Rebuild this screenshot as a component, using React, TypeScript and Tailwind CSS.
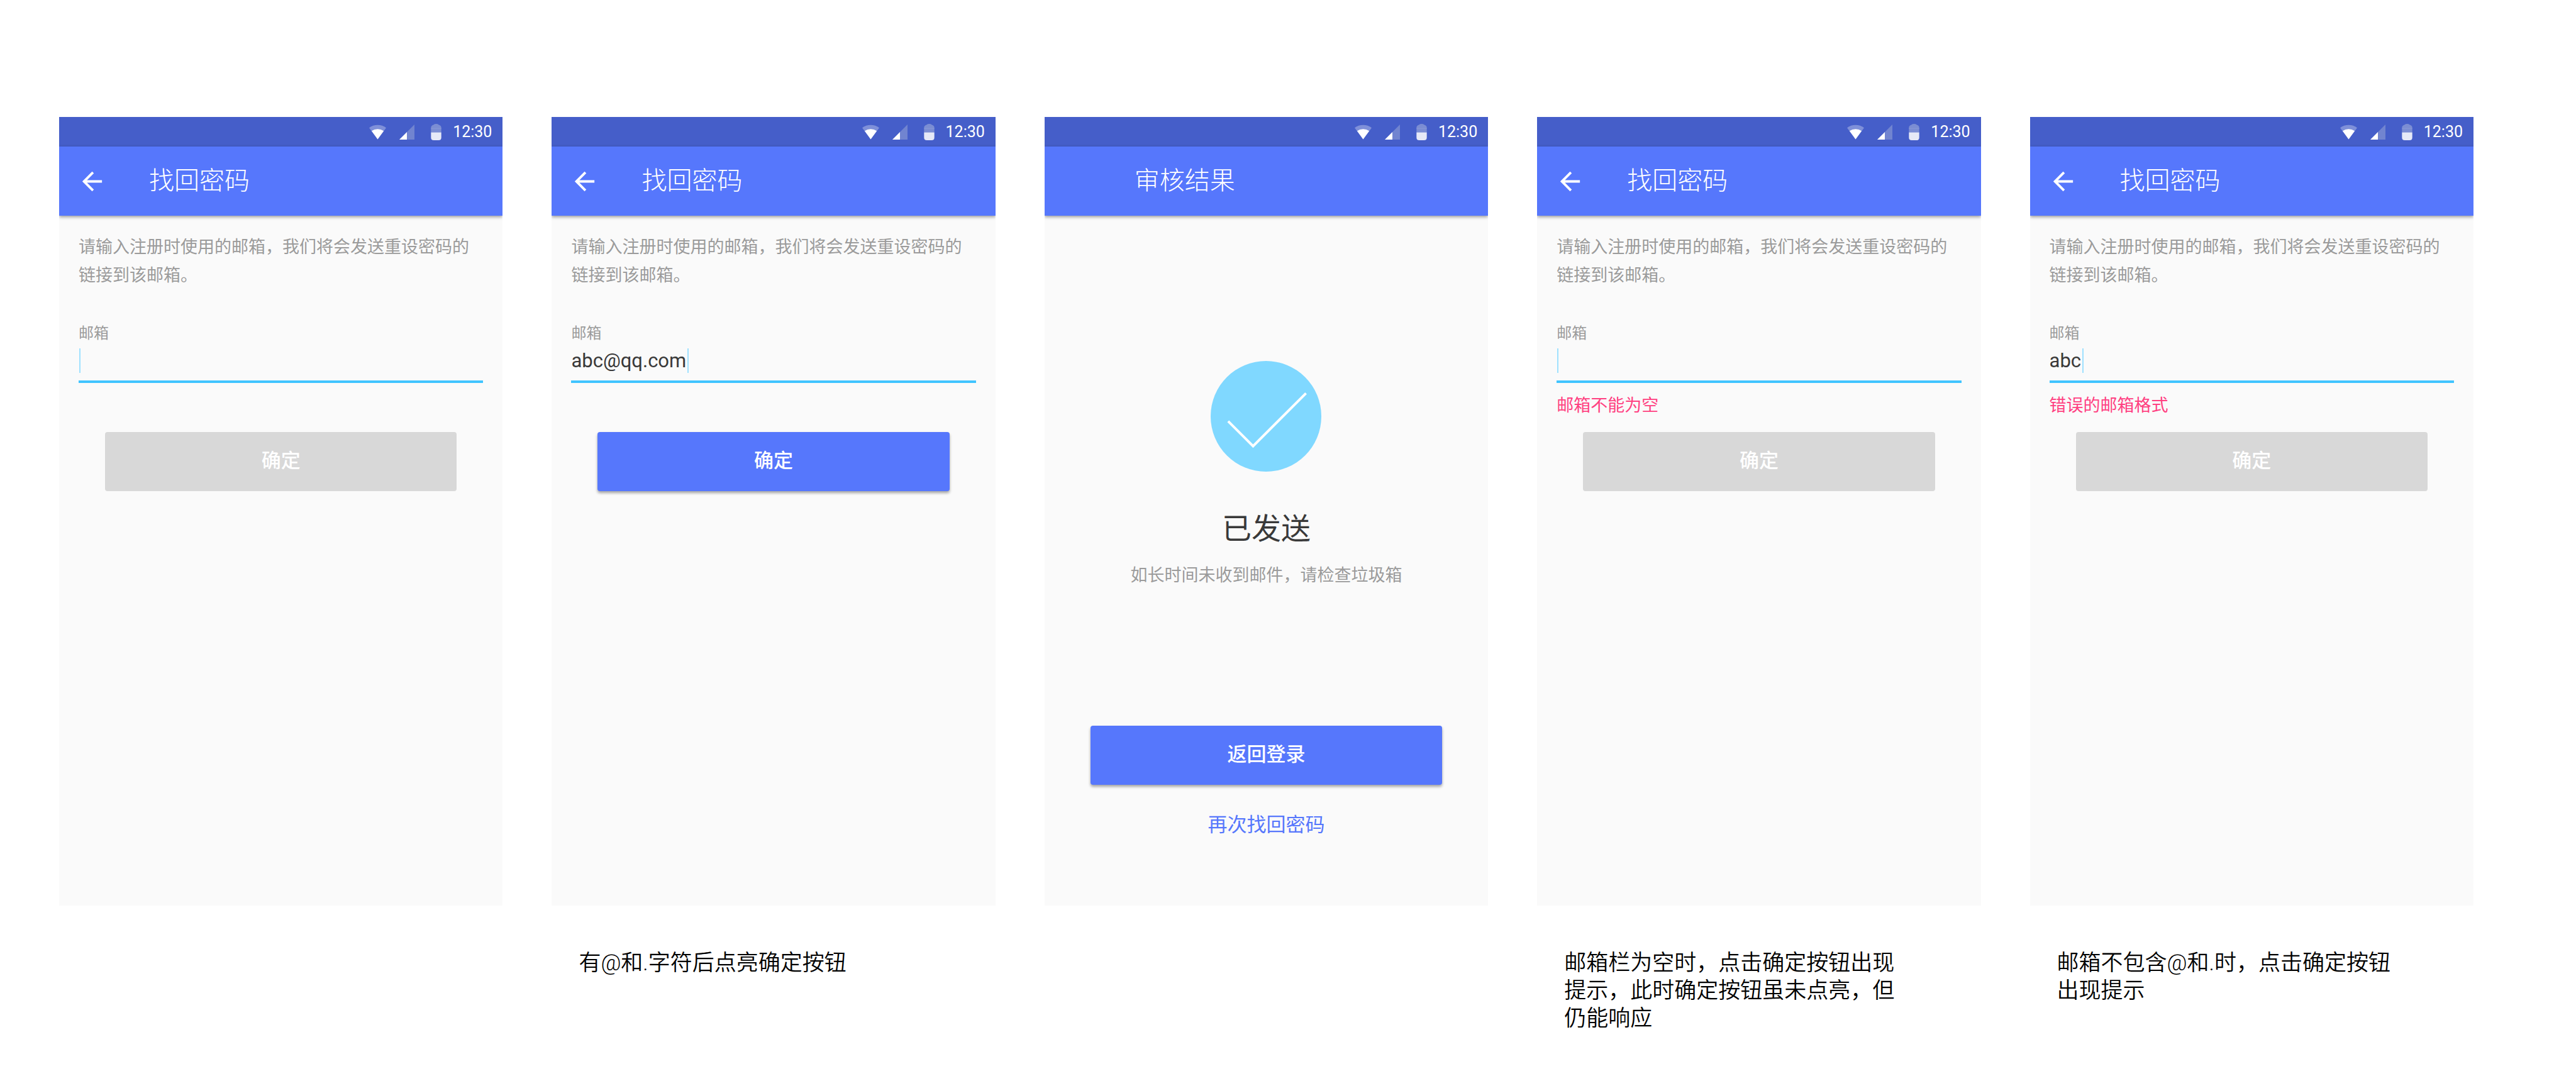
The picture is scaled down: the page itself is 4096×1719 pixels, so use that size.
import { useId, useState, type ReactNode } from "react";

function WifiIcon() {
  return (
    <svg viewBox="0 0 28 24" className="h-6 w-[27px]" aria-hidden="true">
      <path d="M14 24 L0 5 A23.6 23.6 0 0 1 28 5 Z" fill="#7f90d9" />
      <path d="M14 24 L4 10.2 A17 17 0 0 1 24 10.2 Z" fill="#fff" />
    </svg>
  );
}

function SignalIcon() {
  return (
    <svg viewBox="0 0 24 24" className="size-6" aria-hidden="true">
      <path d="M0 24 H24 V0 Z" fill="#7184d0" />
      <path d="M0 24 H12 V12 Z" fill="#fff" />
    </svg>
  );
}

function BatteryIcon() {
  return (
    <svg viewBox="0 0 17 27" className="h-[26px] w-[17px]" aria-hidden="true">
      <path d="M0 14 V6.5 Q0 2.5 4 1.5 Q6 0 8.500 0 Q11 0 13 1.500 Q17 2.500 17 6.500 V14 Z" fill="#7b8dd3" />
      <path d="M0 7 H17 V8 H0 Z" fill="#8b9ad8" />
      <path d="M0 14 H17 V22.500 Q17 27 12.500 27 H4.500 Q0 27 0 22.500 Z" fill="#e6e9f7" />
    </svg>
  );
}

function BackIcon() {
  return (
    <svg viewBox="0 0 24 24" className="size-[47px]" fill="currentColor" aria-hidden="true">
      <path d="M20 11H7.830l5.590-5.590L12 4l-8 8 8 8 1.410-1.410L7.830 13H20v-2z" />
    </svg>
  );
}

function SuccessIcon() {
  return (
    <svg viewBox="0 0 180 180" className="size-44" aria-hidden="true">
      <circle cx="90" cy="90" r="90" fill="#80d8ff" />
      <path d="M28.500 98 L69 138.500 L155 52.500" fill="none" stroke="#fff" strokeWidth="4" />
    </svg>
  );
}

function Phone({ title, back, children }: { title: string; back?: boolean; children: ReactNode }) {
  return (
    <section className="flex aspect-[9/16] flex-col overflow-hidden bg-[#fafafa]">
      <div className="flex h-[47px] shrink-0 items-center justify-end bg-[#455ec9] pr-[17px] text-white">
        <WifiIcon />
        <span className="w-[21px]" />
        <SignalIcon />
        <span className="w-[26px]" />
        <BatteryIcon />
        <time className="ml-[18px] text-[25px] leading-8">12:30</time>
      </div>
      <header className="flex h-[110px] shrink-0 items-center bg-[#5677fc] pl-[29px] text-white shadow-[0_2px_5px_rgba(0,0,0,0.4)]">
        <div className="w-[114px] shrink-0">
          {back && (
            <button type="button" aria-label="返回" className="block">
              <BackIcon />
            </button>
          )}
        </div>
        <h1 className="text-[40px] leading-[56px] font-light">{title}</h1>
      </header>
      {children}
    </section>
  );
}

function PrimaryButton({ active, children }: { active: boolean; children: ReactNode }) {
  return (
    <button
      type="button"
      className={
        active
          ? "mx-[73px] h-[94px] shrink-0 rounded bg-[#5677fc] pb-1 text-[31px] leading-[45px] font-medium text-white shadow-[0_3px_4px_rgba(0,0,0,0.35)]"
          : "mx-[73px] h-[94px] shrink-0 rounded bg-[#d8d8d8] pb-1 text-[31px] leading-[45px] font-medium text-white"
      }
    >
      {children}
    </button>
  );
}

function RecoverForm({ initial, error }: { initial: string; error?: string }) {
  const id = useId();
  const [email, setEmail] = useState(initial);
  const active = email.includes("@") && email.includes(".");
  return (
    <form className="flex flex-col pt-7" onSubmit={(e) => e.preventDefault()}>
      <p className="mx-[31px] text-[27px] leading-[45px] text-[#9b9b9b]">
        请输入注册时使用的邮箱，我们将会发送重设密码的链接到该邮箱。
      </p>
      <label htmlFor={id} className="mx-[31px] mt-[53px] text-[24px] leading-8 text-[#9b9b9b]">
        邮箱
      </label>
      <div className="mx-[31px] mt-2 flex border-b-4 border-[#40c4ff] pb-3">
        <input
          id={id}
          type="text"
          value={email}
          onChange={(e) => setEmail(e.target.value)}
          className="field-sizing-content h-[39px] p-0 text-[31px] leading-[39px] text-[#393939] caret-transparent outline-none"
        />
        <span className={email ? "ml-0.5 h-[39px] w-0.5 bg-[#9fe1ff]" : "h-[39px] w-0.5 bg-[#9fe1ff]"} />
      </div>
      <p className="mx-[31px] mt-4 mb-[22px] min-h-10 text-[27px] leading-10 text-[#ff4081]">{error}</p>
      <PrimaryButton active={active}>确定</PrimaryButton>
    </form>
  );
}

function Result() {
  return (
    <div className="flex flex-col pt-[231px] text-center">
      <div className="flex justify-center">
        <SuccessIcon />
      </div>
      <h2 className="mt-[61px] text-[47px] leading-[60px] text-[#393939]">已发送</h2>
      <p className="mt-[22px] text-[27px] leading-[45px] text-[#9b9b9b]">如长时间未收到邮件，请检查垃圾箱</p>
      <div className="mt-[216px] flex flex-col">
        <PrimaryButton active>返回登录</PrimaryButton>
      </div>
      <a href="#recover" className="mt-[41px] self-center text-[31px] leading-[45px] text-[#5677fc]">
        再次找回密码
      </a>
    </div>
  );
}

function Note({ children }: { children: ReactNode }) {
  return (
    <p className="mt-[70px] ml-[43px] max-w-[540px] text-[35px] leading-[44px] font-[350] text-black">{children}</p>
  );
}

export default function App() {
  return (
    <main
      lang="zh-CN"
      className="grid min-h-screen grid-cols-5 content-start gap-x-[78px] bg-white pt-[186px] pr-[163px] pl-[94px] font-[Roboto,'Noto_Sans_CJK_SC',sans-serif]"
    >
      <div>
        <Phone title="找回密码" back>
          <RecoverForm initial="" />
        </Phone>
      </div>
      <div>
        <Phone title="找回密码" back>
          <RecoverForm initial="abc@qq.com" />
        </Phone>
        <Note>有@和.字符后点亮确定按钮</Note>
      </div>
      <div>
        <Phone title="审核结果">
          <Result />
        </Phone>
      </div>
      <div>
        <Phone title="找回密码" back>
          <RecoverForm initial="" error="邮箱不能为空" />
        </Phone>
        <Note>邮箱栏为空时，点击确定按钮出现提示，此时确定按钮虽未点亮，但仍能响应</Note>
      </div>
      <div>
        <Phone title="找回密码" back>
          <RecoverForm initial="abc" error="错误的邮箱格式" />
        </Phone>
        <Note>邮箱不包含@和.时，点击确定按钮出现提示</Note>
      </div>
    </main>
  );
}
